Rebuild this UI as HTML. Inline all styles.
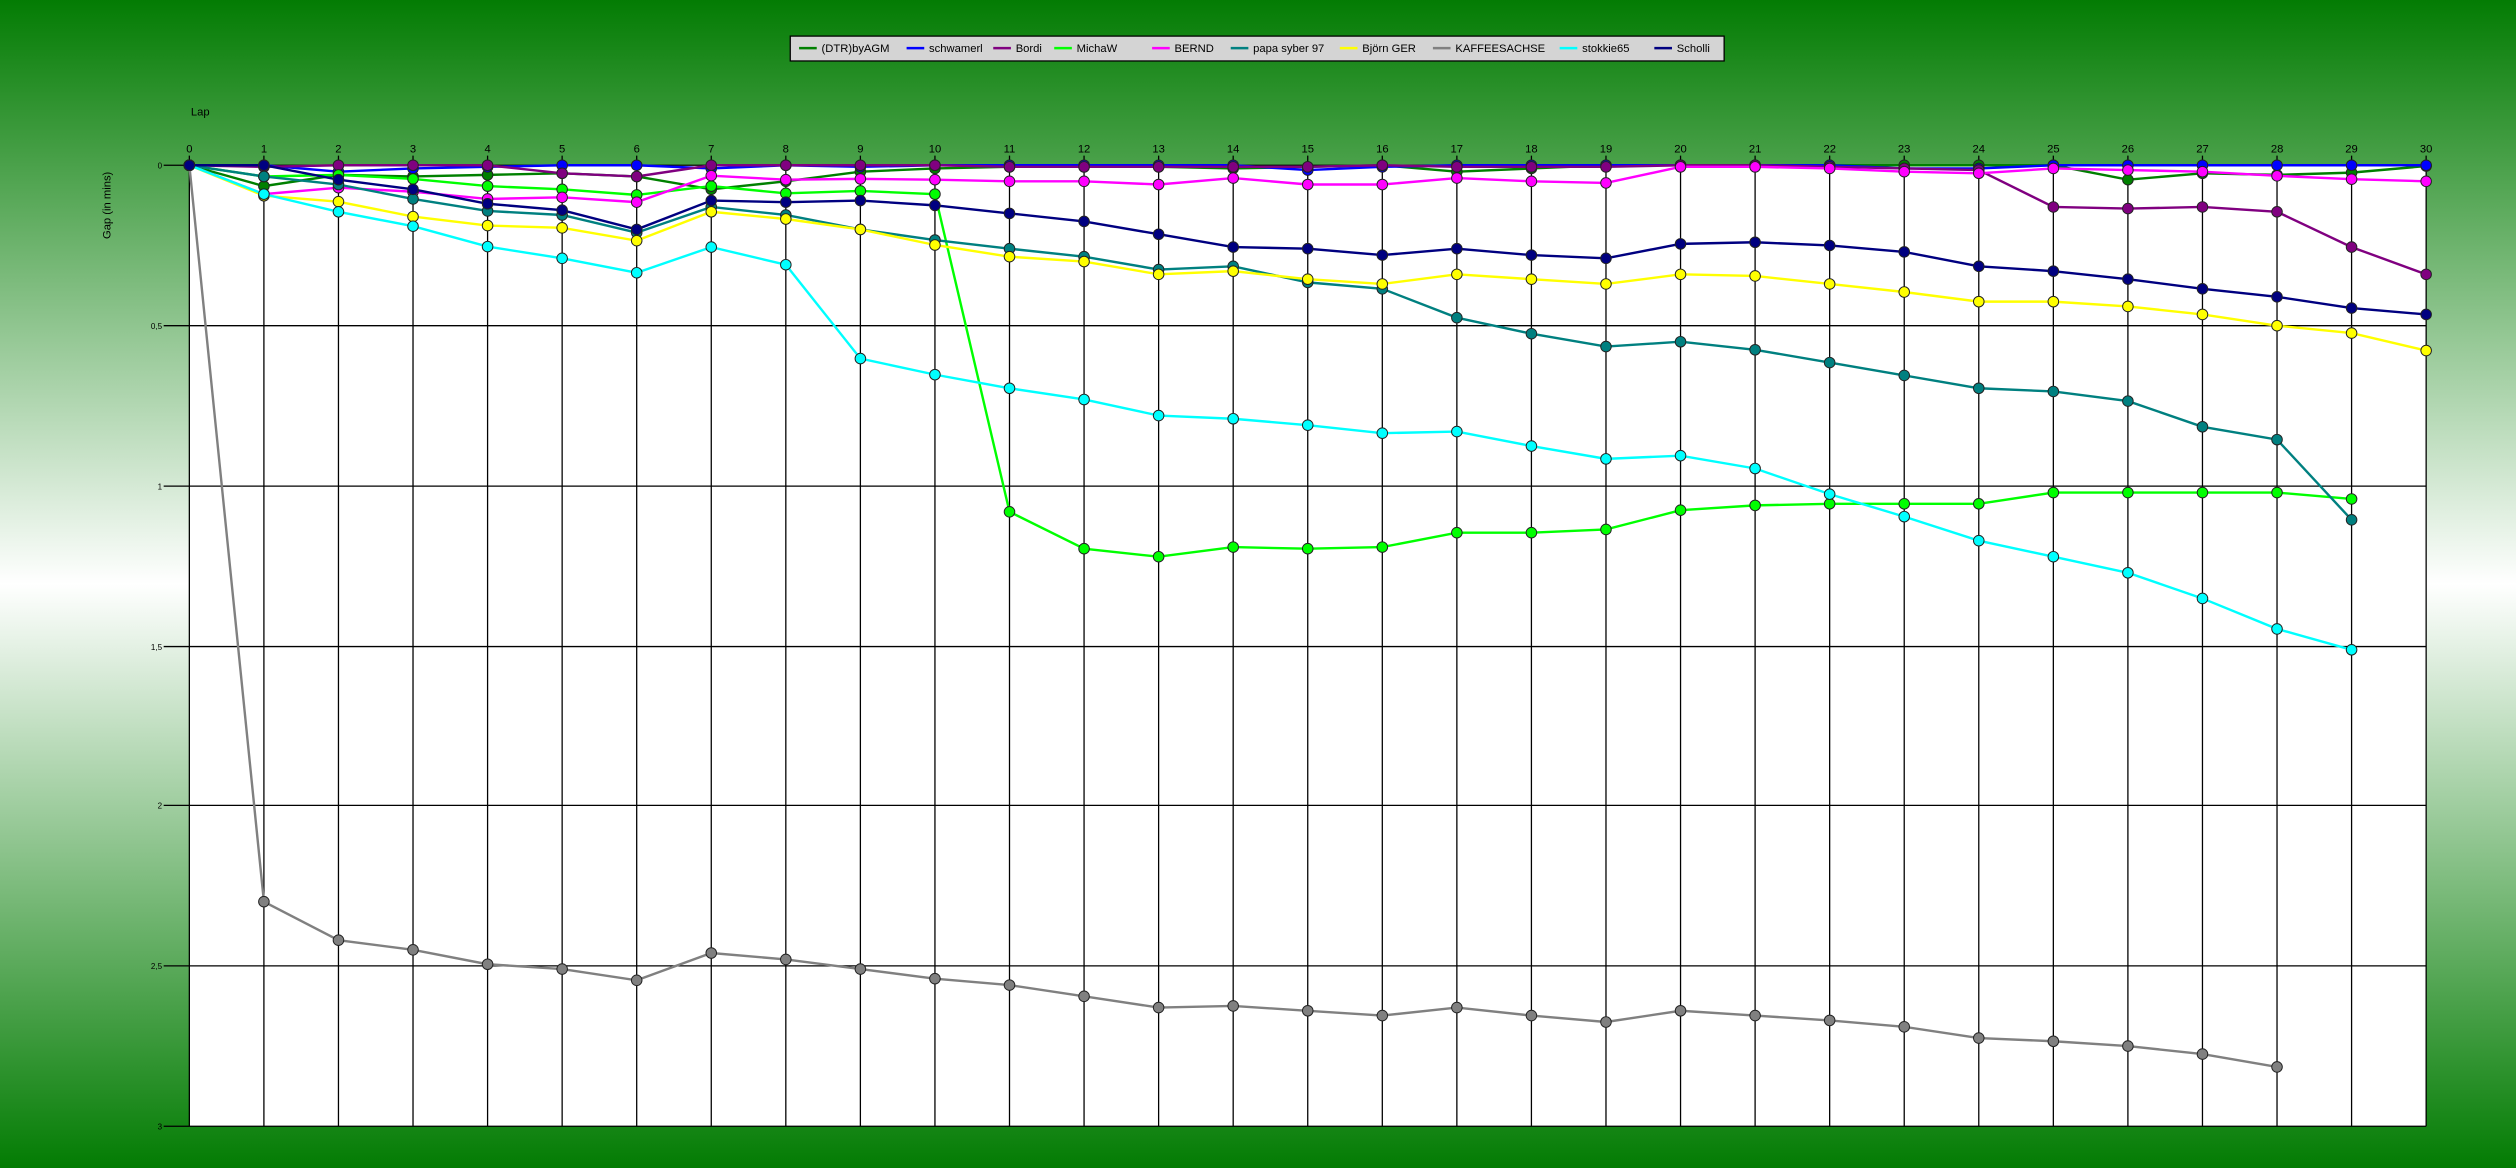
<!DOCTYPE html>
<html><head><meta charset="utf-8"><style>
html,body{margin:0;padding:0;width:2516px;height:1168px;overflow:hidden;}
svg{display:block;font-family:"Liberation Sans",sans-serif;}
</style></head><body>
<svg id="s" width="2516" height="1168" viewBox="0 0 1568 728" preserveAspectRatio="none" xmlns="http://www.w3.org/2000/svg">
<defs>
<linearGradient id="bg" x1="0" y1="0" x2="0" y2="1">
<stop offset="0" stop-color="#037c03"/>
<stop offset="0.5" stop-color="#ffffff"/>
<stop offset="1" stop-color="#037c03"/>
</linearGradient>
</defs>
<rect x="0" y="0" width="1568" height="728" fill="url(#bg)"/>
<rect x="118" y="103" width="1394" height="599" fill="#fff"/>
<g id="grid" stroke="#000" stroke-width="0.8"></g>
<g stroke="#000" stroke-width="0.8">
<line x1="102" y1="103" x2="1512" y2="103"/>
<line x1="102" y1="203" x2="1512" y2="203"/>
<line x1="102" y1="303" x2="1512" y2="303"/>
<line x1="102" y1="403" x2="1512" y2="403"/>
<line x1="102" y1="502" x2="1512" y2="502"/>
<line x1="102" y1="602" x2="1512" y2="602"/>
<line x1="102" y1="702" x2="1512" y2="702"/>
</g>
<g font-size="5" fill="#000" text-anchor="end">
<text x="101" y="105">0</text><text x="101" y="205">0,5</text><text x="101" y="305">1</text><text x="101" y="405">1,5</text><text x="101" y="504">2</text><text x="101" y="604">2,5</text><text x="101" y="704">3</text>
</g>
<text x="119" y="72" font-size="7">Lap</text>
<text transform="translate(69,128) rotate(-90)" font-size="7" text-anchor="middle">Gap (in mins)</text>
<g font-size="7" text-anchor="middle" fill="#000">
<text x="118" y="95">0</text><text x="164.5" y="95">1</text><text x="210.9" y="95">2</text><text x="257.4" y="95">3</text><text x="303.9" y="95">4</text><text x="350.3" y="95">5</text><text x="396.8" y="95">6</text><text x="443.3" y="95">7</text><text x="489.7" y="95">8</text><text x="536.2" y="95">9</text><text x="582.7" y="95">10</text><text x="629.1" y="95">11</text><text x="675.6" y="95">12</text><text x="722.1" y="95">13</text><text x="768.5" y="95">14</text><text x="815" y="95">15</text><text x="861.5" y="95">16</text><text x="907.9" y="95">17</text><text x="954.4" y="95">18</text><text x="1000.9" y="95">19</text><text x="1047.3" y="95">20</text><text x="1093.8" y="95">21</text><text x="1140.3" y="95">22</text><text x="1186.7" y="95">23</text><text x="1233.2" y="95">24</text><text x="1279.7" y="95">25</text><text x="1326.1" y="95">26</text><text x="1372.6" y="95">27</text><text x="1419.1" y="95">28</text><text x="1465.5" y="95">29</text><text x="1512" y="95">30</text>
</g>
<g id="series"></g>
<rect x="492.5" y="22.5" width="582" height="15.5" fill="#d4d4d4" stroke="#000" stroke-width="0.8"/>
<g font-size="7" fill="#000">
<line x1="498" y1="30" x2="509" y2="30" stroke="#008000" stroke-width="1.5"/><text x="512" y="32.5">(DTR)byAGM</text>
<line x1="565" y1="30" x2="576" y2="30" stroke="#0000ff" stroke-width="1.5"/><text x="579" y="32.5">schwamerl</text>
<line x1="619" y1="30" x2="630" y2="30" stroke="#800080" stroke-width="1.5"/><text x="633" y="32.5">Bordi</text>
<line x1="657" y1="30" x2="668" y2="30" stroke="#00ff00" stroke-width="1.5"/><text x="671" y="32.5">MichaW</text>
<line x1="718" y1="30" x2="729" y2="30" stroke="#ff00ff" stroke-width="1.5"/><text x="732" y="32.5">BERND</text>
<line x1="767" y1="30" x2="778" y2="30" stroke="#008080" stroke-width="1.5"/><text x="781" y="32.5">papa syber 97</text>
<line x1="835" y1="30" x2="846" y2="30" stroke="#ffff00" stroke-width="1.5"/><text x="849" y="32.5">Björn GER</text>
<line x1="893" y1="30" x2="904" y2="30" stroke="#808080" stroke-width="1.5"/><text x="907" y="32.5">KAFFEESACHSE</text>
<line x1="972" y1="30" x2="983" y2="30" stroke="#00ffff" stroke-width="1.5"/><text x="986" y="32.5">stokkie65</text>
<line x1="1031" y1="30" x2="1042" y2="30" stroke="#000080" stroke-width="1.5"/><text x="1045" y="32.5">Scholli</text>
</g>
</svg>
<script>
(function(){
var NS="http://www.w3.org/2000/svg";
function X(i){return 118+i*1394/30;}
var g=document.getElementById('grid');
for(var i=0;i<=30;i++){var l=document.createElementNS(NS,'line');l.setAttribute('x1',X(i));l.setAttribute('x2',X(i));l.setAttribute('y1',97);l.setAttribute('y2',702);g.appendChild(l);}
var S=[
["#008000",[103,116,109,110,109,108,110,118,113,107,105,104,104,104,105,104,103,107,105,103,103,103,103,103,103,103,112,108,109,107.6,103.5]],
["#0000ff",[103,103,107,105,104,103,103,105,103,104,103,103,103,103,103,106,104,103,103,103,103,103,103,105,105,103,103,103,103,103,103]],
["#800080",[103,104,103,103,103,108,110,103,103,103,103,104,104,104,104,104,103,104,104,104,103,103,104,105,106,129,130,129,132,154,171]],
["#00ff00",[103,110,109,111.5,116,118,121.5,116,120.5,119,121,319,342,347,341,342,341,332,332,330,318,315,314,314,314,307,307,307,307,311]],
["#ff00ff",[103,121,117,119.5,124,123,126,109.5,112,111.5,112,113,113,115,111,115,115,111,113,114,104,104,105,107,108,105,106,107,109.6,111.7,113]],
["#008080",[103,110,115,124,131.5,134,145,129,134,143,149.6,155,160,168,166,176,180,198,208,216,213,218,226,234,242,244,250,266,274,324]],
["#ffff00",[103,122,125.7,135,140.6,142,150,132,136.5,143,152.7,160,163,171,169,174,177,171,174,177,171,172,177,182,188,188,191,196,203,207.6,218.5]],
["#808080",[103,562,586,592,601,604,611,594,598,604,610,614,621,628,627,630,633,628,633,637,630,633,636,640,647,649,652,657,665]],
["#00ffff",[103,121,132,141,153.7,161,170,154,165,223.5,233.5,242,249,259,261,265,270,269,278,286,284,292,308,322,337,347,357,373,392,405]],
["#000080",[103,103,112,118,127,131,143,125,126,125,128,133,138,146,154,155,159,155,159,161,152,151,153,157,166,169,174,180,185,192,196]]
];
var sg=document.getElementById('series');
S.forEach(function(s){
var pts=s[1].map(function(y,i){return X(i)+','+y;}).join(' ');
var p=document.createElementNS(NS,'polyline');p.setAttribute('points',pts);p.setAttribute('fill','none');p.setAttribute('stroke',s[0]);p.setAttribute('stroke-width','1.5');sg.appendChild(p);
s[1].forEach(function(y,i){var c=document.createElementNS(NS,'circle');c.setAttribute('cx',X(i));c.setAttribute('cy',y);c.setAttribute('r',3.3);c.setAttribute('fill',s[0]);c.setAttribute('stroke','#222');c.setAttribute('stroke-width','0.6');sg.appendChild(c);});
});
})();
</script>
</body></html>
